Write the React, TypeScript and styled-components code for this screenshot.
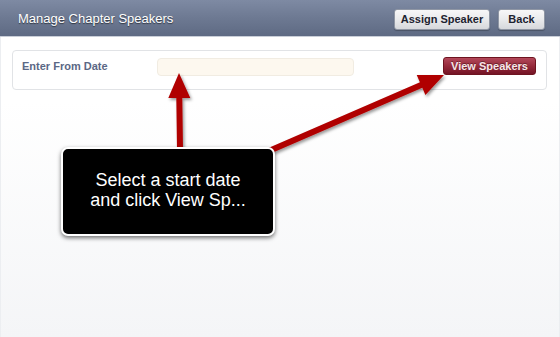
import React from "react";
import styled, { createGlobalStyle } from "styled-components";

const Global = createGlobalStyle`
  html, body { margin: 0; padding: 0; }
  body { font-family: "Liberation Sans", Arial, sans-serif; }
`;

const Page = styled.div`
  position: relative;
  width: 560px;
  height: 337px;
  overflow: hidden;
  box-sizing: border-box;
  box-shadow: inset 1px 0 0 #eceef1, inset -1px 0 0 #eceef1;
  background: linear-gradient(to bottom, #ffffff 0%, #ffffff 30%, #f4f5f7 100%);
`;

const Header = styled.div`
  height: 37px;
  box-sizing: border-box;
  display: flex;
  align-items: center;
  justify-content: space-between;
  padding: 0 15px 0 18px;
  background: linear-gradient(to bottom, #7e8aa3 0%, #6d7992 50%, #5e6a83 100%);
  border-bottom: 1px solid #c9ced8;
`;

const Title = styled.div`
  color: #ffffff;
  font-size: 13px;
  text-shadow: 0 1px 1px rgba(0, 0, 0, 0.55);
`;

const Actions = styled.div`
  display: flex;
  gap: 8px;
  margin-top: 2px;
`;

const GreyButton = styled.button<{ $w: number }>`
  width: ${(p) => p.$w}px;
  height: 21px;
  padding: 0;
  border: 1px solid #8f96a4;
  border-radius: 3px;
  background: linear-gradient(to bottom, #f7f7f8 0%, #e9eaec 50%, #d6d8dc 100%);
  font-family: "Liberation Sans", Arial, sans-serif;
  font-weight: bold;
  font-size: 11px;
  color: #1d2330;
  box-shadow: 0 1px 1px rgba(0, 0, 0, 0.25);
`;

const Content = styled.div`
  padding: 13px 13px 0 12px;
`;

const Panel = styled.div`
  height: 40px;
  box-sizing: border-box;
  border: 1px solid #e1e3e6;
  border-radius: 4px;
  background: #ffffff;
  display: flex;
  align-items: center;
  padding: 0 10px 0 9px;
`;

const Label = styled.div`
  width: 135px;
  font-size: 11px;
  font-weight: bold;
  color: #5b6885;
  margin-top: -8px;
`;

const DateInput = styled.input`
  width: 197px;
  height: 18px;
  box-sizing: border-box;
  border: 1px solid #f1ece2;
  border-radius: 4px;
  background: #fdf8ef;
  margin-top: -6px;
  outline: none;
`;

const RedButton = styled.button`
  margin-left: auto;
  width: 93px;
  height: 18px;
  padding: 0;
  border: 1px solid #6e1420;
  border-radius: 3px;
  background: linear-gradient(to bottom, #b3485a 0%, #962a3b 50%, #741425 100%);
  font-family: "Liberation Sans", Arial, sans-serif;
  font-weight: bold;
  font-size: 11px;
  color: #f7e6e8;
  text-shadow: 0 -1px 0 rgba(0, 0, 0, 0.35);
  margin-top: -8px;
`;

const Arrows = styled.svg`
  position: absolute;
  left: 0;
  top: 0;
  width: 560px;
  height: 337px;
  pointer-events: none;
`;

const Callout = styled.div`
  position: absolute;
  left: 61px;
  top: 147px;
  width: 214px;
  height: 89px;
  box-sizing: border-box;
  background: #000000;
  border: 2px solid #ffffff;
  border-radius: 7px;
  box-shadow: 0 2px 4px rgba(0, 0, 0, 0.55);
  display: flex;
  align-items: center;
  justify-content: center;
  text-align: center;
  color: #ffffff;
  font-size: 18px;
  line-height: 20px;
  padding-bottom: 3px;
`;

function Arrow({ x1, y1, x2, y2 }: { x1: number; y1: number; x2: number; y2: number }) {
  const dx = x2 - x1;
  const dy = y2 - y1;
  const len = Math.hypot(dx, dy);
  const ux = dx / len;
  const uy = dy / len;
  const px = -uy;
  const py = ux;
  const head = 25;
  const half = 11;
  const sw = 3;
  const bx = x2 - ux * head;
  const by = y2 - uy * head;
  const pts = [
    [x1 + px * sw, y1 + py * sw],
    [bx + px * sw, by + py * sw],
    [bx + px * half, by + py * half],
    [x2, y2],
    [bx - px * half, by - py * half],
    [bx - px * sw, by - py * sw],
    [x1 - px * sw, y1 - py * sw],
  ]
    .map((p) => p.map((v) => v.toFixed(1)).join(","))
    .join(" ");
  return <polygon points={pts} fill="#b00000" filter="url(#ash)" />;
}

export default function App() {
  return (
    <>
      <Global />
      <Page>
        <Header>
          <Title>Manage Chapter Speakers</Title>
          <Actions>
            <GreyButton $w={96}>Assign Speaker</GreyButton>
            <GreyButton $w={47}>Back</GreyButton>
          </Actions>
        </Header>
        <Content>
          <Panel>
            <Label>Enter From Date</Label>
            <DateInput />
            <RedButton>View Speakers</RedButton>
          </Panel>
        </Content>
        <Arrows viewBox="0 0 560 337">
          <defs>
            <filter id="ash" x="-20%" y="-20%" width="140%" height="140%">
              <feDropShadow dx="1.5" dy="2" stdDeviation="1.5" floodColor="#000" floodOpacity="0.4" />
            </filter>
          </defs>
          <Arrow x1={180} y1={150} x2={179} y2={73} />
          <Arrow x1={262} y1={154} x2={444} y2={75} />
        </Arrows>
        <Callout>
          Select a start date
          <br />
          and click View Sp...
        </Callout>
      </Page>
    </>
  );
}
